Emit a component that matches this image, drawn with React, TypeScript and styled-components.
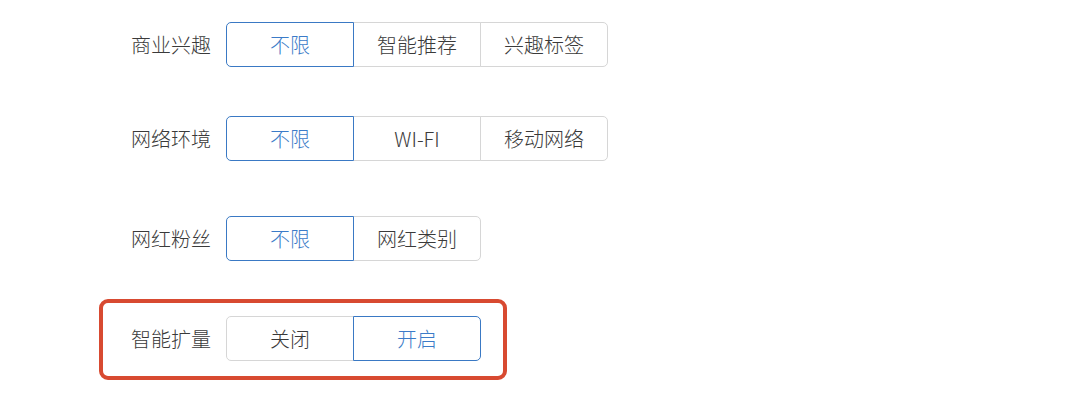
import styled, { createGlobalStyle } from "styled-components";

const GlobalStyle = createGlobalStyle`
  html, body {
    margin: 0;
    padding: 0;
    background: #ffffff;
  }
  body {
    font-family: "Noto Sans CJK SC", "Noto Sans", sans-serif;
    color: #333333;
  }
`;

type Option = { label: string; active?: boolean };

type FilterRow = {
  title: string;
  options: Option[];
  gapTop: number;
  highlight?: boolean;
};

const rows: FilterRow[] = [
  {
    title: "商业兴趣",
    gapTop: 22,
    options: [{ label: "不限", active: true }, { label: "智能推荐" }, { label: "兴趣标签" }],
  },
  {
    title: "网络环境",
    gapTop: 49,
    options: [{ label: "不限", active: true }, { label: "WI-FI" }, { label: "移动网络" }],
  },
  {
    title: "网红粉丝",
    gapTop: 55,
    options: [{ label: "不限", active: true }, { label: "网红类别" }],
  },
  {
    title: "智能扩量",
    gapTop: 38,
    highlight: true,
    options: [{ label: "关闭" }, { label: "开启", active: true }],
  },
];

const App = () => {
  return (
    <>
      <GlobalStyle />
      <Page>
        {rows.map((row) => (
          <Row key={row.title} $gapTop={row.gapTop} $highlight={row.highlight}>
            <Label>{row.title}</Label>
            <Group>
              {row.options.map((opt) => (
                <OptionButton key={opt.label} $active={opt.active}>
                  {opt.label}
                </OptionButton>
              ))}
            </Group>
          </Row>
        ))}
      </Page>
    </>
  );
};

const Page = styled.div`
  display: flex;
  flex-direction: column;
  align-items: flex-start;
  padding-left: 99px;
  width: 1086px;
  height: 400px;
  box-sizing: border-box;
`;

const Row = styled.div<{ $gapTop: number; $highlight?: boolean }>`
  display: flex;
  align-items: center;
  gap: 15px;
  margin-top: ${(p) => p.$gapTop}px;
  padding: ${(p) => (p.$highlight ? "13px 22px 15px 28px" : "0 0 0 32px")};
  border: ${(p) => (p.$highlight ? "4px solid #d84a31" : "none")};
  border-radius: 9px;
`;

const Label = styled.span`
  font-size: 20px;
  font-weight: 300;
  line-height: 45px;
  color: #3a3a3a;
  width: 80px;
  white-space: nowrap;
`;

const Group = styled.div`
  display: flex;
  height: 45px;
`;

const OptionButton = styled.button<{ $active?: boolean }>`
  position: relative;
  z-index: ${(p) => (p.$active ? 1 : 0)};
  width: 128px;
  height: 45px;
  margin: 0 0 0 -1px;
  padding: 0;
  box-sizing: border-box;
  background: #ffffff;
  border: 1px solid ${(p) => (p.$active ? "#3a79c4" : "#d6d6d6")};
  color: ${(p) => (p.$active ? "#3b7bc8" : "#3a3a3a")};
  font-family: "Noto Sans CJK SC", "Noto Sans", sans-serif;
  font-size: 20px;
  font-weight: 300;
  cursor: pointer;
  &:first-child {
    margin-left: 0;
    border-radius: 5px 0 0 5px;
  }
  &:last-child {
    border-radius: 0 5px 5px 0;
  }
`;

export default App;
